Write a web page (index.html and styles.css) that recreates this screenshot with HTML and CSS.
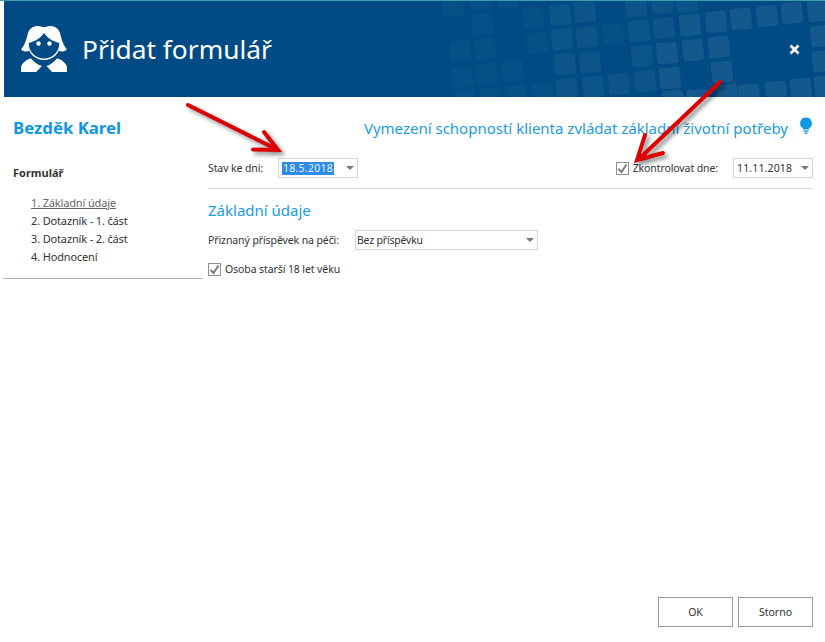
FILE: index.html
```html
<!DOCTYPE html>
<html lang="cs">
<head>
  <meta charset="UTF-8">
  <title>Přidat formulář</title>
  <link rel="stylesheet" href="styles.css">
</head>
<body>
  <div class="app">
    <header class="header">
      <svg class="tiles" width="400" height="96" viewBox="425 0 400 96" aria-hidden="true">
        <defs>
          <rect id="t" x="-10.5" y="-10.5" width="21" height="21" rx="3" transform="rotate(-6)"/>
        </defs>
        <g class="faint">
          <use href="#t" transform="translate(460 50)"/>
          <use href="#t" transform="translate(462 76)"/>
          <use href="#t" transform="translate(465 99)"/>
          <use href="#t" transform="translate(453 5)"/>
          <use href="#t" transform="translate(480 -2)"/>
          <use href="#t" transform="translate(482 23)"/>
          <use href="#t" transform="translate(485 48)"/>
          <use href="#t" transform="translate(487 73)"/>
          <use href="#t" transform="translate(490 97)"/>
          <use href="#t" transform="translate(507 -3)"/>
          <use href="#t" transform="translate(513 70)"/>
          <use href="#t" transform="translate(516 94)"/>
          <use href="#t" transform="translate(533 17)"/>
          <use href="#t" transform="translate(537 42)"/>
          <use href="#t" transform="translate(542 92)"/>
          <use href="#t" transform="translate(613 33)"/>
        </g>
        <g class="mid">
          <use href="#t" transform="translate(560 14)"/>
          <use href="#t" transform="translate(585 11)"/>
          <use href="#t" transform="translate(562 38)"/>
          <use href="#t" transform="translate(587 36)"/>
          <use href="#t" transform="translate(565 63)"/>
          <use href="#t" transform="translate(590 61)"/>
          <use href="#t" transform="translate(567 88)"/>
          <use href="#t" transform="translate(593 86)"/>
          <use href="#t" transform="translate(619 83)"/>
          <use href="#t" transform="translate(636 5)"/>
          <use href="#t" transform="translate(662 2)"/>
          <use href="#t" transform="translate(687 1)"/>
          <use href="#t" transform="translate(639 30)"/>
          <use href="#t" transform="translate(664 27)"/>
          <use href="#t" transform="translate(642 55)"/>
          <use href="#t" transform="translate(645 80)"/>
        </g>
        <g class="bright">
          <use href="#t" transform="translate(690 24)"/>
          <use href="#t" transform="translate(716 21)"/>
          <use href="#t" transform="translate(741 18)"/>
          <use href="#t" transform="translate(767 15)"/>
          <use href="#t" transform="translate(792 12)"/>
          <use href="#t" transform="translate(818 10)"/>
          <use href="#t" transform="translate(667 52)"/>
          <use href="#t" transform="translate(693 49)"/>
          <use href="#t" transform="translate(719 46)"/>
          <use href="#t" transform="translate(821 35)"/>
          <use href="#t" transform="translate(670 77)"/>
          <use href="#t" transform="translate(722 71)"/>
          <use href="#t" transform="translate(823 60)"/>
          <use href="#t" transform="translate(673 100)"/>
          <use href="#t" transform="translate(698 99)"/>
          <use href="#t" transform="translate(727 94)"/>
          <use href="#t" transform="translate(749 94)"/>
          <use href="#t" transform="translate(776 91)"/>
          <use href="#t" transform="translate(801 88)"/>
          <use href="#t" transform="translate(825 85)"/>
        </g>
      </svg>
      <svg class="logo" width="50" height="50" viewBox="0 0 50 50" aria-hidden="true">
        <path class="logo-fill" d="M24 3C19 -1 10 1 8 8C6.500 14 5 20 1 24.500C4 27 7 27 9.500 25.500H38.500C41 27 44 27 47 24.500C43 20 41.500 14 40 8C38 1 29 -1 24 3Z"/>
        <circle class="logo-fill" cx="24" cy="18.500" r="16.500"/>
        <path class="logo-cut" d="M8.800 18C13 17 20 14 24 8C28 14 35 17 39.200 18C39.700 26 33 33.500 24 33.500C15 33.500 8.300 26 8.800 18Z"/>
        <circle class="logo-fill" cx="18.500" cy="18.500" r="2.200"/>
        <circle class="logo-fill" cx="29.500" cy="18.500" r="2.200"/>
        <path class="logo-fill" d="M1 47V42C2 38 7 34 11 33.500C14 37 18 40 22 41L16 47Z"/>
        <path class="logo-fill" d="M47 47V42C46 38 41 34 37 33.500C34 37 30 40 26.500 41L32 47Z"/>
      </svg>
      <h1 class="header-title">Přidat formulář</h1>
      <svg class="close" width="11" height="11" viewBox="0 0 11 11" aria-label="Zavřít">
        <path d="M1.500 1.500L9.500 9.500M9.500 1.500L1.500 9.500"/>
      </svg>
    </header>

    <div class="main">
      <aside class="side">
        <div class="client">Bezděk Karel</div>
        <div class="side-label">Formulář</div>
        <ul class="menu">
          <li class="menu-active">1. Základní údaje</li>
          <li>2. Dotazník - 1. část</li>
          <li>3. Dotazník - 2. část</li>
          <li>4. Hodnocení</li>
        </ul>
      </aside>

      <section class="content">
        <div class="form-title">
          <span>Vymezení schopností klienta zvládat základní životní potřeby</span>
          <svg class="bulb" width="14" height="18" viewBox="0 0 14 18" aria-hidden="true">
            <path d="M7 0.500A5.800 5.800 0 0 1 10 11.300V12.500H4V11.300A5.800 5.800 0 0 1 7 0.500Z"/>
            <rect x="4.500" y="13.500" width="5" height="1.300"/>
            <rect x="5.500" y="15.500" width="3" height="1.300"/>
          </svg>
        </div>

        <div class="state-row">
          <label class="field-label">Stav ke dni:</label>
          <div class="select select-date"><span class="selected">18.5.2018</span><i class="caret"></i></div>
          <div class="check-group">
            <span class="check"><svg width="11" height="11" viewBox="0 0 11 11"><path d="M1.500 6L4.500 9L9.500 1.500"/></svg></span>
            <label class="field-label">Zkontrolovat dne:</label>
          </div>
          <div class="select select-date"><span class="date">11.11.2018</span><i class="caret"></i></div>
        </div>

        <h2 class="section-title">Základní údaje</h2>

        <div class="care-row">
          <label class="field-label">Přiznaný příspěvek na péči:</label>
          <div class="select select-wide"><span class="select-text">Bez příspěvku</span><i class="caret"></i></div>
        </div>

        <div class="adult-row">
          <span class="check"><svg width="11" height="11" viewBox="0 0 11 11"><path d="M1.500 6L4.500 9L9.500 1.500"/></svg></span>
          <label class="field-label">Osoba starší 18 let věku</label>
        </div>
      </section>
    </div>

    <footer class="footer">
      <button class="btn">OK</button>
      <button class="btn">Storno</button>
    </footer>

    <svg class="arrows" width="825" height="642" viewBox="0 0 825 642" aria-hidden="true">
      <path d="M188 105L276 149M264 132L278 150L253 149.500"/>
      <path d="M720 82L640 158M645 135L637 160L663 153"/>
    </svg>
  </div>
</body>
</html>
```

FILE: styles.css
```css
html, body {
  height: 100%;
  margin: 0;
  padding: 0;
}
body {
  font-family: "Noto Sans", "Open Sans", sans-serif;
  font-size: 10.5px;
  color: #333;
  background: #fff;
  overflow: hidden;
}
.app {
  position: relative;
  display: flex;
  flex-direction: column;
  height: 642px;
  width: 825px;
  border-top: 1px solid #3f9db0;
  box-sizing: border-box;
}
.header {
  position: relative;
  display: flex;
  align-items: center;
  height: 96px;
  margin-left: 4px;
  padding-left: 16px;
  background: #004b85;
  color: #fff;
  overflow: hidden;
  flex: none;
}
.tiles {
  position: absolute;
  right: 0;
  top: 0;
}
.tiles .faint { fill: rgba(255, 255, 255, 0.025); }
.tiles .mid { fill: rgba(255, 255, 255, 0.05); }
.tiles .bright { fill: rgba(255, 255, 255, 0.08); }
.logo {
  position: relative;
  flex: none;
  margin-top: 2px;
}
.logo-fill { fill: #fff; }
.logo-cut { fill: #004b85; }
.header-title {
  position: relative;
  margin: 0 0 0 12px;
  font-size: 26.3px;
  font-weight: 400;
}
.close {
  position: absolute;
  left: 785px;
  top: 43px;
}
.close path {
  fill: none;
  stroke: #fff;
  stroke-width: 2.6;
}

.main {
  display: flex;
  flex: 1;
  min-height: 0;
}
.side {
  width: 200px;
  height: 181px;
  margin-left: 3px;
  border-bottom: 1px solid #b5b5b5;
  flex: none;
}
.client {
  margin: 20px 0 0 10px;
  font-size: 16.8px;
  font-weight: 700;
  line-height: 22px;
  color: #0f96e0;
}
.side-label {
  margin: 26px 0 0 10px;
  font-size: 11px;
  font-weight: 700;
  line-height: 16px;
}
.menu {
  list-style: none;
  margin: 13px 0 0 28px;
  padding: 0;
  font-size: 11px;
  letter-spacing: -0.15px;
}
.menu li {
  height: 18px;
  line-height: 18px;
}
.menu .menu-active {
  color: #666;
  text-decoration: underline;
}

.content {
  width: 605px;
  margin-left: 5px;
  flex: none;
}
.form-title {
  display: flex;
  justify-content: flex-end;
  align-items: center;
  gap: 11px;
  height: 24px;
  margin: 19px 0 0;
  font-size: 15px;
  color: #1a9be2;
}
.bulb {
  margin-top: -4px;
}
.bulb path, .bulb rect { fill: #0f96e0; }
.state-row {
  display: flex;
  align-items: center;
  height: 30px;
  margin-top: 18px;
  border-bottom: 1px solid #ddd;
}
.field-label {
  white-space: nowrap;
  letter-spacing: -0.1px;
}
.state-row > .field-label { width: 70px; }
.select {
  position: relative;
  display: flex;
  align-items: center;
  height: 20px;
  padding-left: 3px;
  border: 1px solid #d6d6d6;
  box-sizing: border-box;
  background: #fff;
  margin-bottom: 10px;
}
.state-row .field-label { margin-bottom: 10px; }
.select-date { width: 80px; }
.select-wide { width: 183px; margin-bottom: 0; padding-left: 1px; }
.select-text { letter-spacing: -0.2px; }
.selected {
  padding: 0 1px;
  line-height: 13px;
  background: #2f8be6;
  color: #e8f2ff;
  letter-spacing: 0.25px;
}
.date { padding-left: 0; letter-spacing: 0.15px; }
.caret {
  position: absolute;
  right: 3px;
  top: 7px;
  width: 0;
  height: 0;
  border-left: 4px solid transparent;
  border-right: 4px solid transparent;
  border-top: 4px solid #777;
}
.check-group {
  display: flex;
  align-items: center;
  gap: 4px;
  margin-left: auto;
  margin-right: 15px;
}
.check-group .check { margin-bottom: 10px; }
.check {
  display: flex;
  align-items: center;
  justify-content: center;
  width: 13px;
  height: 13px;
  border: 1px solid #8f8f8f;
  box-sizing: border-box;
  flex: none;
}
.check path {
  fill: none;
  stroke: #7a7a7a;
  stroke-width: 2;
}
.section-title {
  margin: 10px 0 0;
  font-size: 15px;
  font-weight: 400;
  line-height: 22px;
  color: #1a9be2;
}
.care-row {
  display: flex;
  align-items: center;
  margin-top: 9px;
}
.care-row .field-label { width: 147px; }
.adult-row {
  display: flex;
  align-items: center;
  gap: 4px;
  margin-top: 12px;
}

.footer {
  display: flex;
  justify-content: flex-end;
  gap: 5px;
  padding: 0 12px 15px 0;
  flex: none;
}
.btn {
  width: 75px;
  height: 30px;
  padding: 0 0 1px;
  border: 1px solid #999;
  background: #fff;
  font: inherit;
  color: #333;
}

.arrows {
  position: absolute;
  left: 0;
  top: -1px;
  pointer-events: none;
  filter: drop-shadow(3px 3px 2px rgba(0, 0, 0, 0.45));
}
.arrows path {
  fill: none;
  stroke: #dc0000;
  stroke-width: 4;
  stroke-linecap: round;
  stroke-linejoin: miter;
}
```
